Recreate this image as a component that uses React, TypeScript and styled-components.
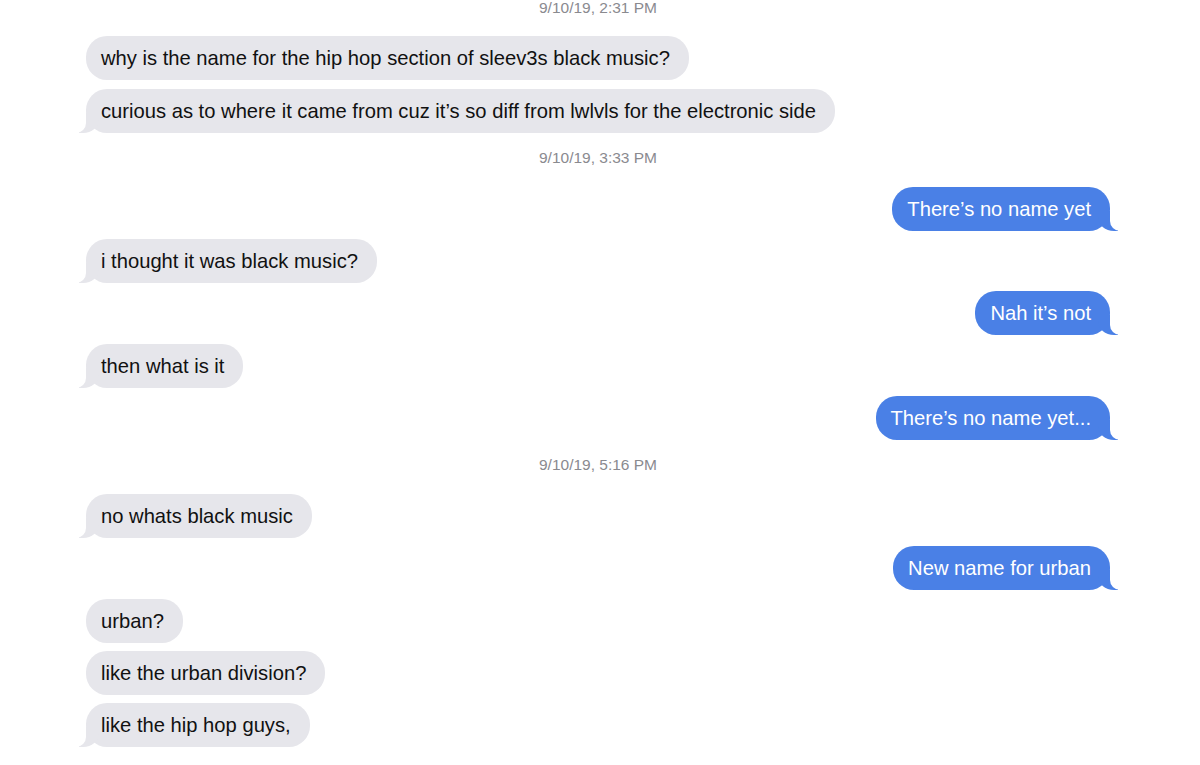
import React from 'react'
import styled, { createGlobalStyle, css } from 'styled-components'

const GlobalStyle = createGlobalStyle`
  html, body {
    margin: 0;
    padding: 0;
    background: #fff;
  }
  body {
    font-family: "Liberation Sans", Arial, Helvetica, sans-serif;
    -webkit-font-smoothing: antialiased;
  }
`

const BLUE = '#4a80e6'
const GRAY = '#e6e6eb'

const ThreadStyled = styled.div`
  width: 1200px;
  height: 765px;
  overflow: hidden;
  display: flex;
  flex-direction: column;
  gap: 8.4px;
  padding: 0 90px 0 86px;
  box-sizing: border-box;
`

const StampStyled = styled.div<{ $first?: boolean }>`
  padding: 8.5px 0 12.5px;
  ${p => p.$first && css`margin-top: -9px;`}
  line-height: 16px;
  font-size: 15.5px;
  color: #8a8a8f;
  text-align: center;
`

const RowStyled = styled.div<{ $me?: boolean }>`
  display: flex;
  justify-content: ${p => (p.$me ? 'flex-end' : 'flex-start')};
`

const BubbleStyled = styled.div<{ $me?: boolean; $tail?: boolean }>`
  position: relative;
  height: 44px;
  line-height: 44px;
  padding: 0 19px 0 15px;
  border-radius: 21px;
  font-size: 20.2px;
  white-space: nowrap;
  background: ${p => (p.$me ? BLUE : GRAY)};
  color: ${p => (p.$me ? '#fff' : '#111')};

  ${p =>
    p.$tail &&
    (p.$me
      ? css`
          &::before {
            content: '';
            position: absolute;
            right: -8px;
            bottom: 0;
            width: 20px;
            height: 20px;
            background: ${BLUE};
            border-bottom-left-radius: 16px 14px;
          }
          &::after {
            content: '';
            position: absolute;
            right: -26px;
            bottom: 0;
            width: 26px;
            height: 20px;
            background: #fff;
            border-bottom-left-radius: 10px;
          }
        `
      : css`
          &::before {
            content: '';
            position: absolute;
            left: -7px;
            bottom: 0;
            width: 20px;
            height: 20px;
            background: ${GRAY};
            border-bottom-right-radius: 16px 14px;
          }
          &::after {
            content: '';
            position: absolute;
            left: -26px;
            bottom: 0;
            width: 26px;
            height: 20px;
            background: #fff;
            border-bottom-right-radius: 10px;
          }
        `)}
`

type Item =
  | { kind: 'stamp'; text: string }
  | { kind: 'msg'; text: string; me?: boolean; tail?: boolean }

const items: Item[] = [
  { kind: 'stamp', text: '9/10/19, 2:31 PM' },
  { kind: 'msg', text: 'why is the name for the hip hop section of sleev3s black music?' },
  { kind: 'msg', text: 'curious as to where it came from cuz it\u2019s so diff from lwlvls for the electronic side', tail: true },
  { kind: 'stamp', text: '9/10/19, 3:33 PM' },
  { kind: 'msg', text: 'There\u2019s no name yet', me: true, tail: true },
  { kind: 'msg', text: 'i thought it was black music?', tail: true },
  { kind: 'msg', text: 'Nah it\u2019s not', me: true, tail: true },
  { kind: 'msg', text: 'then what is it', tail: true },
  { kind: 'msg', text: 'There\u2019s no name yet...', me: true, tail: true },
  { kind: 'stamp', text: '9/10/19, 5:16 PM' },
  { kind: 'msg', text: 'no whats black music', tail: true },
  { kind: 'msg', text: 'New name for urban', me: true, tail: true },
  { kind: 'msg', text: 'urban?' },
  { kind: 'msg', text: 'like the urban division?' },
  { kind: 'msg', text: 'like the hip hop guys,', tail: true },
]

function App() {
  return (
    <>
      <GlobalStyle />
      <ThreadStyled>
        {items.map((item, i) =>
          item.kind === 'stamp' ? (
            <StampStyled key={i} $first={i === 0}>{item.text}</StampStyled>
          ) : (
            <RowStyled key={i} $me={item.me}>
              <BubbleStyled $me={item.me} $tail={item.tail}>{item.text}</BubbleStyled>
            </RowStyled>
          )
        )}
      </ThreadStyled>
    </>
  )
}

export default App
